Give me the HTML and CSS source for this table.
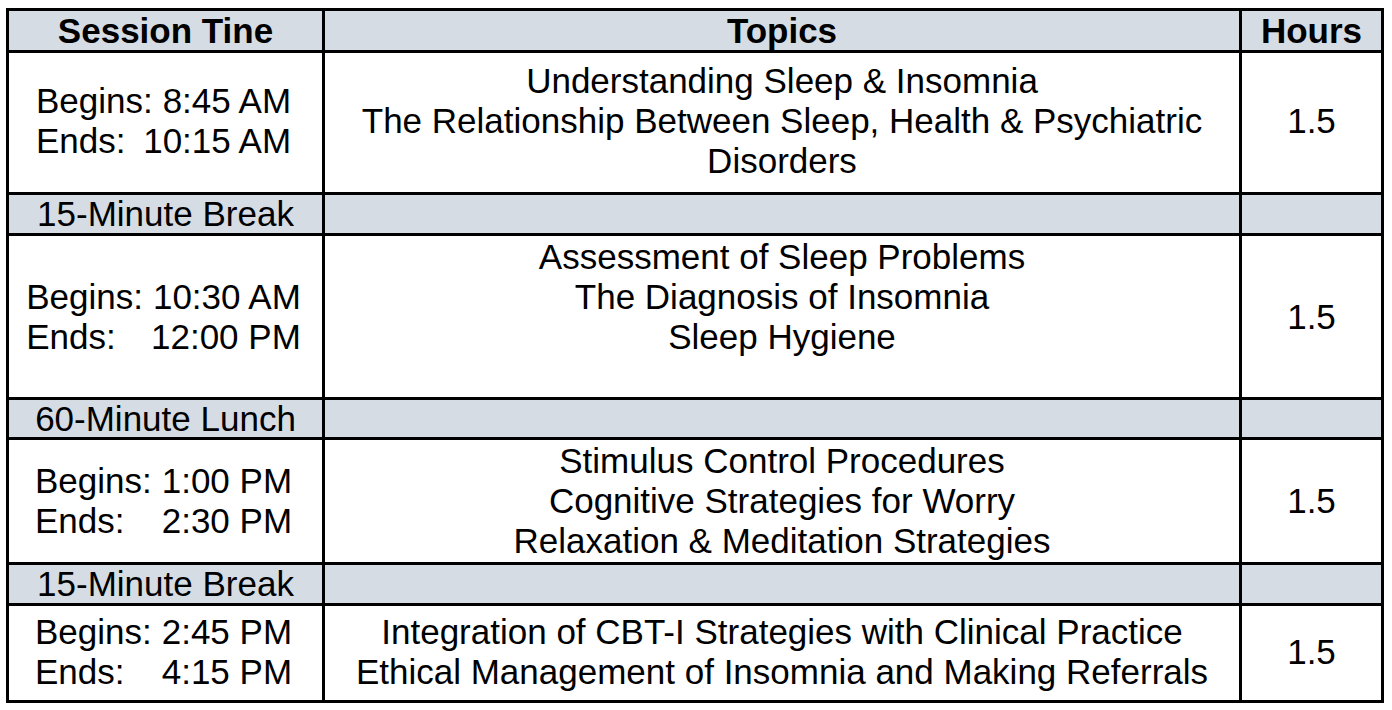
FILE: index.html
```html
<!DOCTYPE html>
<html lang="en">
<head>
<meta charset="utf-8">
<title>Session Schedule</title>
<link rel="stylesheet" href="styles.css">
</head>
<body>
<table class="schedule">
  <colgroup>
    <col class="col-time">
    <col class="col-topic">
    <col class="col-hours">
  </colgroup>
  <thead>
    <tr class="row-head">
      <th>Session Tine</th>
      <th>Topics</th>
      <th>Hours</th>
    </tr>
  </thead>
  <tbody>
    <tr class="row-1">
      <td>
        <div class="times">
          <div class="tl"><span>Begins:</span><span>8:45 AM</span></div>
          <div class="tl"><span>Ends:</span><span>10:15 AM</span></div>
        </div>
      </td>
      <td>Understanding Sleep &amp; Insomnia<br>The Relationship Between Sleep, Health &amp; Psychiatric<br>Disorders</td>
      <td>1.5</td>
    </tr>
    <tr class="row-break">
      <td>15-Minute Break</td>
      <td></td>
      <td></td>
    </tr>
    <tr class="row-2">
      <td>
        <div class="times">
          <div class="tl"><span>Begins:</span><span>10:30 AM</span></div>
          <div class="tl"><span>Ends:</span><span>12:00 PM</span></div>
        </div>
      </td>
      <td>Assessment of Sleep Problems<br>The Diagnosis of Insomnia<br>Sleep Hygiene<br>&nbsp;</td>
      <td>1.5</td>
    </tr>
    <tr class="row-lunch">
      <td>60-Minute Lunch</td>
      <td></td>
      <td></td>
    </tr>
    <tr class="row-3">
      <td>
        <div class="times">
          <div class="tl"><span>Begins:</span><span>1:00 PM</span></div>
          <div class="tl"><span>Ends:</span><span>2:30 PM</span></div>
        </div>
      </td>
      <td>Stimulus Control Procedures<br>Cognitive Strategies for Worry<br>Relaxation &amp; Meditation Strategies</td>
      <td>1.5</td>
    </tr>
    <tr class="row-break">
      <td>15-Minute Break</td>
      <td></td>
      <td></td>
    </tr>
    <tr class="row-4">
      <td>
        <div class="times">
          <div class="tl"><span>Begins:</span><span>2:45 PM</span></div>
          <div class="tl"><span>Ends:</span><span>4:15 PM</span></div>
        </div>
      </td>
      <td>Integration of CBT-I Strategies with Clinical Practice<br>Ethical Management of Insomnia and Making Referrals</td>
      <td>1.5</td>
    </tr>
  </tbody>
</table>
</body>
</html>
```

FILE: styles.css
```css
html, body {
  margin: 0;
  padding: 0;
  background: #ffffff;
}

body {
  padding: 8px 0 0 6px;
  font-family: "Liberation Sans", Arial, sans-serif;
  color: #000000;
}

.schedule {
  border-collapse: separate;
  border-spacing: 0;
  table-layout: fixed;
  width: 1378px;
  border-top: 3px solid #000;
  border-left: 3px solid #000;
  font-size: 35px;
  line-height: 40px;
}

.col-time { width: 316px; }
.col-topic { width: 917px; }
.col-hours { width: 142px; }

.schedule th,
.schedule td {
  box-sizing: border-box;
  padding: 0;
  border-right: 3px solid #000;
  border-bottom: 3px solid #000;
  text-align: center;
  vertical-align: middle;
  white-space: nowrap;
}

.schedule th {
  font-weight: bold;
  background: #d6dce4;
  line-height: 36px;
}

.row-head { height: 42px; }
.row-1 { height: 142px; }
.row-break { height: 41px; }
.row-2 { height: 164px; }
.row-lunch { height: 40px; }
.row-3 { height: 125px; }
.row-4 { height: 97px; }

.row-break td,
.row-lunch td {
  background: #d6dce4;
  line-height: 34px;
}

.row-1 td,
.row-4 td {
  padding-bottom: 3px;
}

.row-3 td {
  padding-bottom: 1px;
}

.times {
  display: inline-flex;
  flex-direction: column;
  text-align: left;
  margin-left: -4px;
}

.tl {
  display: flex;
  justify-content: space-between;
  gap: 10px;
}
```
